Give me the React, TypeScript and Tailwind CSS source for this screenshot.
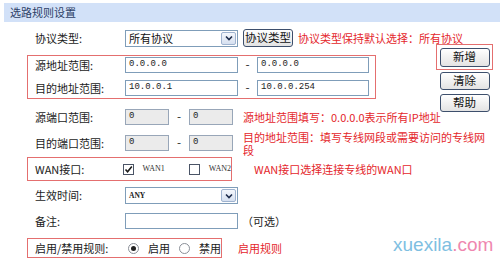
import React from 'react';

const cjk = "font-['Noto_Sans_CJK_SC',sans-serif]";
const mono = "font-['Liberation_Mono',monospace]";

/**
 * Petits contrôles façon vieux routeur (style XP)
 */
function TextBox({ value = '', w, grey }: { value?: string; w: string; grey?: boolean }) {
  return (
    <div
      className={`${w} h-[16px] border flex items-center pl-[3px] text-[9px] text-[#222] ${mono} ${
        grey ? 'bg-[#ebebeb] border-[#98a6b8]' : 'bg-white border-[#7f9db9]'
      }`}
    >
      {value}
    </div>
  );
}

function SelectBox({ value, small }: { value: string; small?: boolean }) {
  return (
    <div className="w-[113px] h-[17px] border border-[#7f9db9] bg-white flex items-center">
      <span
        className={
          small
            ? "flex-1 pl-[3px] text-[7.5px] font-['Liberation_Serif',serif] font-bold text-[#222]"
            : `flex-1 pl-[3px] text-[11px] leading-none text-[#111] ${cjk}`
        }
      >
        {value}
      </span>
      <div className="w-[15px] h-[13px] mr-[1px] border border-[#9fb3cf] rounded-[2px] bg-linear-to-b from-[#f4f7fc] to-[#d6e0f0] flex items-center justify-center">
        <svg width="8" height="6" viewBox="0 0 8 6">
          <path d="M1 1.5 L4 4.5 L7 1.5" stroke="#1d2b4a" strokeWidth="1.6" fill="none" />
        </svg>
      </div>
    </div>
  );
}

function Btn({ children, w = 'w-[50px]', h = 'h-[18px]' }: { children: React.ReactNode; w?: string; h?: string }) {
  return (
    <div
      className={`${w} ${h} border border-[#3d4f6c] rounded-[3px] bg-linear-to-b from-white to-[#e3e3e3] flex items-center justify-center text-[11.5px] leading-none text-[#111] ${cjk}`}
    >
      {children}
    </div>
  );
}

function CheckBox({ checked }: { checked?: boolean }) {
  return (
    <div className="w-[11px] h-[11px] border border-[#4a5466] bg-white flex items-center justify-center">
      {checked && (
        <svg width="9" height="9" viewBox="0 0 9 9">
          <path d="M1.5 4.5 L3.6 6.8 L7.8 1.6" stroke="#1a1a1a" strokeWidth="1.6" fill="none" />
        </svg>
      )}
    </div>
  );
}

function Radio({ checked }: { checked?: boolean }) {
  return (
    <div className="w-[11px] h-[11px] rounded-full border border-[#8a8f98] bg-white flex items-center justify-center">
      {checked && <div className="w-[5px] h-[5px] rounded-full bg-[#222]" />}
    </div>
  );
}

function Label({ children }: { children: React.ReactNode }) {
  return <div className={`w-[90px] text-[11px] leading-none text-[#1a1a1a] ${cjk}`}>{children}</div>;
}

function Note({ children, className = '' }: { children: React.ReactNode; className?: string }) {
  return <div className={`text-[11px] leading-[13px] text-[#e4262b] ${cjk} ${className}`}>{children}</div>;
}

function Dash({ w }: { w: string }) {
  return <div className={`${w} text-center text-[11px] leading-none text-[#333] ${mono}`}>-</div>;
}

export default function App() {
  return (
    <div className="relative w-[500px] h-[262px] overflow-hidden bg-white">
      {/* bandeau titre */}
      <div className="mt-[3px] ml-[4px] h-[19px] bg-[#d2e1f8] flex items-center pl-[6px]">
        <span className={`text-[11px] leading-none text-[#2c3e66] ${cjk}`}>选路规则设置</span>
      </div>

      {/* protocole */}
      <div className="mt-[7px] flex items-center pl-[35px] h-[18px]">
        <Label>协议类型:</Label>
        <SelectBox value="所有协议" />
        <div className="ml-[5px]">
          <Btn>协议类型</Btn>
        </div>
        <Note className="ml-[5px]">协议类型保持默认选择：所有协议</Note>
      </div>

      {/* plages d'adresses + boutons */}
      <div className="mt-[8px] flex items-start">
        <div className="ml-[27px] w-[349px] h-[44px] border border-[#e46f6f] pl-[7px] pt-[1px] flex flex-col gap-[7px]">
          <div className="flex items-center h-[16px]">
            <Label>源地址范围:</Label>
            <TextBox w="w-[113px]" value="0.0.0.0" />
            <Dash w="w-[19px]" />
            <TextBox w="w-[112px]" value="0.0.0.0" />
          </div>
          <div className="flex items-center h-[16px]">
            <Label>目的地址范围:</Label>
            <TextBox w="w-[113px]" value="10.0.0.1" />
            <Dash w="w-[19px]" />
            <TextBox w="w-[112px]" value="10.0.0.254" />
          </div>
        </div>
        <div className="ml-[60px] -mt-[11px] -mb-[13px] w-[57px] flex flex-col items-center">
          <div className="w-[57px] h-[26px] border border-[#e46f6f] flex items-center justify-center">
            <Btn h="h-[19px]">新增</Btn>
          </div>
          <div className="mt-[2px]">
            <Btn>清除</Btn>
          </div>
          <div className="mt-[4px]">
            <Btn>帮助</Btn>
          </div>
        </div>
      </div>

      {/* ports */}
      <div className="mt-[10px] flex items-center pl-[35px] h-[16px]">
        <Label>源端口范围:</Label>
        <TextBox w="w-[44px]" value="0" grey />
        <Dash w="w-[20px]" />
        <TextBox w="w-[44px]" value="0" grey />
        <Note className="ml-[10px]">源地址范围填写：0.0.0.0表示所有IP地址</Note>
      </div>
      <div className="mt-[10px] flex items-center pl-[35px] h-[16px]">
        <Label>目的端口范围:</Label>
        <TextBox w="w-[44px]" value="0" grey />
        <Dash w="w-[20px]" />
        <TextBox w="w-[44px]" value="0" grey />
        <Note className="ml-[10px] mt-[1px]">
          目的地址范围：填写专线网段或需要访问的专线网
          <br />段
        </Note>
      </div>

      {/* WAN */}
      <div className="mt-[6px] flex items-center">
        <div className="ml-[27px] w-[205px] h-[24px] border border-[#e46f6f] pl-[7px] flex items-center">
          <Label>WAN接口:</Label>
          <div className="ml-[3px]">
            <CheckBox checked />
          </div>
          <span className="ml-[9px] text-[8px] font-['Liberation_Serif',serif] text-[#333]">WAN1</span>
          <div className="ml-[24px]">
            <CheckBox />
          </div>
          <span className="ml-[9px] text-[8px] font-['Liberation_Serif',serif] text-[#333]">WAN2</span>
        </div>
        <Note className="ml-[22px]">WAN接口选择连接专线的WAN口</Note>
      </div>

      {/* horaire */}
      <div className="mt-[6px] flex items-center pl-[35px] h-[17px]">
        <Label>生效时间:</Label>
        <SelectBox value="ANY" small />
      </div>

      {/* remarque */}
      <div className="mt-[9px] flex items-center pl-[35px] h-[16px]">
        <Label>备注:</Label>
        <TextBox w="w-[113px]" />
        <span className={`ml-[4px] text-[11px] leading-none text-[#222] ${cjk}`}>（可选）</span>
      </div>

      {/* activation */}
      <div className="mt-[9px] flex items-center">
        <div className="ml-[27px] w-[195px] h-[20px] border border-[#e46f6f] pl-[7px] flex items-center">
          <Label>启用/禁用规则:</Label>
          <div className="ml-[3px]">
            <Radio checked />
          </div>
          <span className={`ml-[9px] text-[11px] leading-none text-[#1a1a1a] ${cjk}`}>启用</span>
          <div className="ml-[9px]">
            <Radio />
          </div>
          <span className={`ml-[9px] text-[11px] leading-none text-[#1a1a1a] ${cjk}`}>禁用</span>
        </div>
        <Note className="ml-[16px]">启用规则</Note>
      </div>

      {/* filigrane */}
      <div className="absolute left-[393px] top-[235px] text-[19px] leading-none font-['Liberation_Sans',sans-serif] opacity-80">
        <span className="text-[#5fb0da]">xuexila</span>
        <span className="text-[#ec6a9c]">.com</span>
      </div>
    </div>
  );
}
